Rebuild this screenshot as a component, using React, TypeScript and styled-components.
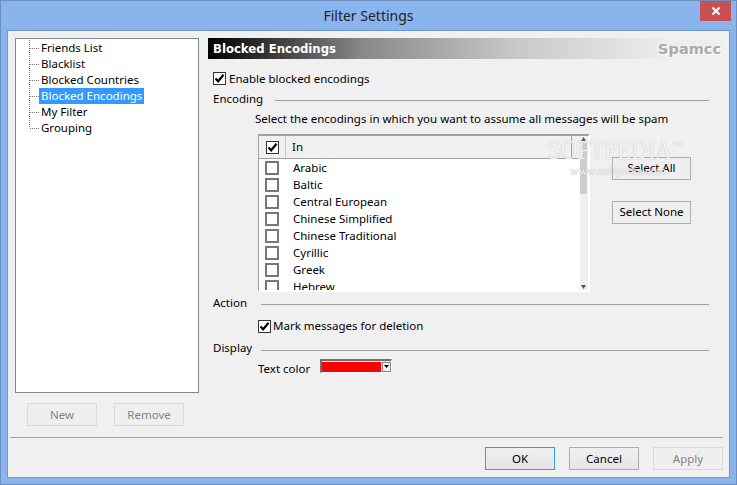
import { FC } from "react";
import styled, { createGlobalStyle } from "styled-components";

const GlobalStyle = createGlobalStyle`
    * { box-sizing: border-box; }
    html, body { margin: 0; padding: 0; }
    body {
        width: 737px;
        height: 485px;
        overflow: hidden;
        font-family: "Noto Sans", "Open Sans", sans-serif;
        font-size: 11.5px;
        color: #000;
    }
`

const Window = styled.div`
    width: 737px;
    height: 485px;
    background: #8ab4ed;
    border: 1px solid #6d8fc0;
    display: flex;
    flex-direction: column;
`
const TitleBar = styled.div`
    height: 29px;
    flex: none;
    display: flex;
    align-items: flex-start;
    justify-content: flex-end;
    position: relative;
`
const TitleText = styled.div`
    position: absolute;
    left: 0;
    right: 0;
    top: 5px;
    text-align: center;
    font-size: 14px;
    line-height: 19px;
    color: #222;
`
const CloseButton = styled.div`
    width: 31px;
    height: 20px;
    margin-right: 5px;
    background: #c75050;
    display: flex;
    align-items: center;
    justify-content: center;
`
const Client = styled.div`
    width: 723px;
    height: 448px;
    margin-left: 6px;
    background: #f0f0f0;
    border: 1px solid #7096cc;
    position: relative;
    display: flex;
    flex-direction: column;
`
const Body = styled.div`
    display: flex;
    gap: 9px;
    padding: 7px 7px 0;
`
const LeftColumn = styled.div`
    width: 184px;
    display: flex;
    flex-direction: column;
`
const TreePanel = styled.div`
    height: 355px;
    background: #fff;
    border: 1px solid #828790;
    padding: 1px 0 0 13px;
`
const TreeRow = styled.div`
    display: flex;
    height: 16px;
    align-items: center;
`
const TreeLabel = styled.span<{ $selected?: boolean }>`
    height: 16px;
    line-height: 16px;
    padding: 0 2px;
    white-space: nowrap;
    background: ${p => (p.$selected ? "#3399ff" : "transparent")};
    color: ${p => (p.$selected ? "#fff" : "#000")};
`
const LeftButtons = styled.div`
    display: flex;
    gap: 17px;
    margin-top: 10px;
    padding-left: 12px;
`
const Button = styled.div<{ $disabled?: boolean; $default?: boolean; $width?: number; $flat?: boolean }>`
    width: ${p => p.$width ?? 70}px;
    height: 23px;
    flex: none;
    display: flex;
    align-items: center;
    justify-content: center;
    padding-bottom: ${p => (p.$flat ? 2 : 0)}px;
    border: 1px solid ${p => (p.$default ? "#3399ff" : p.$disabled ? "#d9d9d9" : "#adadad")};
    background: ${p => (p.$disabled || p.$flat ? "#efefef" : "linear-gradient(#f0f0f0, #e5e5e5)")};
    color: ${p => (p.$disabled ? "#838383" : "#000")};
`
const RightPane = styled.div`
    width: 513px;
    display: flex;
    flex-direction: column;
`
const Banner = styled.div`
    height: 21px;
    flex: none;
    background: linear-gradient(90deg, #000 0%, #888 30%, #c8c8c8 60%, #eeeeee 90%);
    display: flex;
    align-items: center;
    justify-content: space-between;
    padding: 0 0 0 5px;
`
const BannerTitle = styled.span`
    font-family: "DejaVu Sans", sans-serif;
    font-size: 11.7px;
    font-weight: 700;
    color: #fff;
`
const BannerBrand = styled.span`
    font-family: "DejaVu Sans", sans-serif;
    font-size: 14.5px;
    font-weight: 700;
    color: #aaa;
    text-shadow: 1px 1px 0 #fff;
`
const CheckRow = styled.div<{ $left: number; $top: number; $gap: number }>`
    display: flex;
    align-items: center;
    gap: ${p => p.$gap}px;
    height: 13px;
    line-height: 14px;
    margin: ${p => p.$top}px 0 0 ${p => p.$left}px;
`
const CheckText = styled.span<{ $lift?: number }>`
    margin-bottom: ${p => p.$lift ?? 0}px;
`
const Box = styled.span<{ $plain?: boolean }>`
    width: ${p => (p.$plain ? 14 : 13)}px;
    height: ${p => (p.$plain ? 14 : 13)}px;
    flex: none;
    background: #fff;
    border: ${p => (p.$plain ? "2px solid #777" : "1px solid #333")};
    display: flex;
    align-items: center;
    justify-content: center;
`
const SectionHead = styled.div<{ $top: number }>`
    display: flex;
    align-items: center;
    height: 16px;
    margin: ${p => p.$top}px 12px 0 5px;
`
const SectionLabel = styled.span<{ $width: number; $lift: number }>`
    width: ${p => p.$width}px;
    flex: none;
    line-height: 16px;
    margin-bottom: ${p => p.$lift}px;
`
const SectionLine = styled.div`
    flex: 1;
    height: 1px;
    background: #a0a0a0;
`
const Hint = styled.div`
    height: 16px;
    line-height: 16px;
    margin: 3px 0 0 47px;
    white-space: nowrap;
`
const ListRow = styled.div`
    display: flex;
    margin: 7px 0 0 50px;
`
const ListBox = styled.div`
    width: 332px;
    height: 158px;
    flex: none;
    display: flex;
    border-style: solid;
    border-width: 2px 2px 2px 1px;
    border-color: #a0a0a0 #fff #fff #a0a0a0;
    background: #fff;
`
const ListMain = styled.div`
    width: 321px;
    overflow: hidden;
`
const ListHeader = styled.div`
    height: 23px;
    display: flex;
    align-items: center;
    background: #f0f0f0;
    border-bottom: 1px solid #a0a0a0;
`
const HeaderCheckCell = styled.div`
    width: 27px;
    height: 100%;
    flex: none;
    display: flex;
    align-items: center;
    justify-content: center;
    padding-left: 1px;
    border-right: 1px solid #c8c8c8;
`
const HeaderTextCell = styled.div`
    width: 286px;
    height: 100%;
    padding-left: 6px;
    line-height: 22px;
    border-right: 1px solid #a0a0a0;
`
const ListItem = styled.div`
    height: 17px;
    display: flex;
    align-items: center;
    padding-left: 6px;
    gap: 14px;
`
const Scrollbar = styled.div`
    width: 8px;
    flex: none;
    background: #f0f0f0;
    display: flex;
    flex-direction: column;
    align-items: flex-start;
`
const ScrollArrow = styled.div`
    width: 7px;
    height: 6px;
    display: flex;
    justify-content: center;
    align-items: center;
`
const ScrollThumb = styled.div`
    width: 7px;
    height: 51px;
    margin-top: 1px;
    background: #cdcdcd;
`
const ScrollSpace = styled.div`
    flex: 1;
`
const SideButtons = styled.div`
    display: flex;
    flex-direction: column;
    gap: 21px;
    margin-left: 22px;
    padding-top: 23px;
`
const ColorRow = styled.div`
    display: flex;
    margin: 1px 0 0 50px;
`
const ColorLabel = styled.span`
    width: 62px;
    flex: none;
    margin-top: 2px;
    line-height: 16px;
`
const ColorCombo = styled.div`
    width: 72px;
    height: 14px;
    display: flex;
    align-items: center;
    border-style: solid;
    border-width: 2px 1px 1px 2px;
    border-color: #707070 #fff #fff #707070;
    background: #e8e8e8;
`
const ColorSwatch = styled.div`
    width: 59px;
    height: 10px;
    background: #ff0000;
`
const ComboArrow = styled.div`
    width: 9px;
    height: 10px;
    margin-left: 1px;
    background: #f0f0f0;
    border: 1px solid #888;
    display: flex;
    align-items: center;
    justify-content: center;
`
const Separator = styled.div`
    height: 1px;
    width: 713px;
    margin: 11px 0 0 2px;
    background: #a0a0a0;
`
const Footer = styled.div`
    display: flex;
    justify-content: flex-end;
    gap: 14px;
    margin-top: 9px;
    padding-right: 6px;
`
const Watermark = styled.div`
    position: absolute;
    left: 540px;
    top: 101px;
    width: 140px;
    font-family: "Liberation Serif", serif;
    color: rgba(255, 255, 255, 0.85);
    pointer-events: none;
`
const WatermarkBig = styled.div`
    font-size: 23px;
    line-height: 24px;
    white-space: nowrap;
    transform: scaleY(1.15);
    text-shadow: 0 0 1px #aaa;
`
const WatermarkMark = styled.span`
    font-size: 6px;
    vertical-align: 11px;
    margin-left: 1px;
`
const WatermarkUrl = styled.div`
    font-size: 12px;
    line-height: 12px;
    margin: 3px 0 0 22px;
    color: rgba(255, 255, 255, 0.9);
    text-shadow: 0 0 1px #999;
`

const TREE_ITEMS = ["Friends List", "Blacklist", "Blocked Countries", "Blocked Encodings", "My Filter", "Grouping"];
const ENCODINGS = ["Arabic", "Baltic", "Central European", "Chinese Simplified", "Chinese Traditional", "Cyrillic", "Greek", "Hebrew"];

const Tick: FC = () => (
    <svg width="11" height="11" viewBox="0 0 11 11">
        <path d="M1.5 5.5 L4.2 8.3 L9.5 1.8" fill="none" stroke="#000" strokeWidth="2.2" />
    </svg>
);

const Connector: FC<{ last: boolean }> = ({ last }) => (
    <svg width="10" height="16" viewBox="0 0 10 16" style={{ flexShrink: 0 }}>
        <path d={last ? "M0.5 0V8" : "M0.5 0V16"} stroke="#777" strokeDasharray="1 1" />
        <path d="M1 8.5H10" stroke="#777" strokeDasharray="1 1" />
    </svg>
);

const Arrow: FC<{ down?: boolean }> = ({ down }) => (
    <ScrollArrow>
        <svg width="5" height="4" viewBox="0 0 5 4">
            <path d={down ? "M0 0H5L2.5 4Z" : "M0 4H5L2.5 0Z"} fill="#555" />
        </svg>
    </ScrollArrow>
);

const App: FC = () => {
    return (
        <Window>
            <GlobalStyle />
            <TitleBar>
                <TitleText>Filter Settings</TitleText>
                <CloseButton>
                    <svg width="10" height="10" viewBox="0 0 10 10">
                        <path d="M1.5 1.5L8.5 8.5M8.5 1.5L1.5 8.5" stroke="#fff" strokeWidth="2" />
                    </svg>
                </CloseButton>
            </TitleBar>
            <Client>
                <Body>
                    <LeftColumn>
                        <TreePanel>
                            {TREE_ITEMS.map((item, i) => (
                                <TreeRow key={item}>
                                    <Connector last={i === TREE_ITEMS.length - 1} />
                                    <TreeLabel $selected={item === "Blocked Encodings"}>{item}</TreeLabel>
                                </TreeRow>
                            ))}
                        </TreePanel>
                        <LeftButtons>
                            <Button $disabled>New</Button>
                            <Button $disabled>Remove</Button>
                        </LeftButtons>
                    </LeftColumn>
                    <RightPane>
                        <Banner>
                            <BannerTitle>Blocked Encodings</BannerTitle>
                            <BannerBrand>Spamcc</BannerBrand>
                        </Banner>
                        <CheckRow $left={5} $top={13} $gap={3}>
                            <Box><Tick /></Box>
                            <CheckText>Enable blocked encodings</CheckText>
                        </CheckRow>
                        <SectionHead $top={7}>
                            <SectionLabel $width={62} $lift={3}>Encoding</SectionLabel>
                            <SectionLine />
                        </SectionHead>
                        <Hint>Select the encodings in which you want to assume all messages will be spam</Hint>
                        <ListRow>
                            <ListBox>
                                <ListMain>
                                    <ListHeader>
                                        <HeaderCheckCell><Box><Tick /></Box></HeaderCheckCell>
                                        <HeaderTextCell>In</HeaderTextCell>
                                    </ListHeader>
                                    {ENCODINGS.map(name => (
                                        <ListItem key={name}>
                                            <Box $plain />
                                            {name}
                                        </ListItem>
                                    ))}
                                </ListMain>
                                <Scrollbar>
                                    <Arrow />
                                    <ScrollThumb />
                                    <ScrollSpace />
                                    <Arrow down />
                                </Scrollbar>
                            </ListBox>
                            <SideButtons>
                                <Button $width={79} $flat>Select All</Button>
                                <Button $width={79} $flat>Select None</Button>
                            </SideButtons>
                        </ListRow>
                        <SectionHead $top={4}>
                            <SectionLabel $width={48} $lift={2}>Action</SectionLabel>
                            <SectionLine />
                        </SectionHead>
                        <CheckRow $left={50} $top={8} $gap={2}>
                            <Box><Tick /></Box>
                            <CheckText $lift={2}>Mark messages for deletion</CheckText>
                        </CheckRow>
                        <SectionHead $top={9}>
                            <SectionLabel $width={48} $lift={4}>Display</SectionLabel>
                            <SectionLine />
                        </SectionHead>
                        <ColorRow>
                            <ColorLabel>Text color</ColorLabel>
                            <ColorCombo>
                                <ColorSwatch />
                                <ComboArrow>
                                    <svg width="5" height="3" viewBox="0 0 5 3"><path d="M0 0H5L2.5 3Z" fill="#000" /></svg>
                                </ComboArrow>
                            </ColorCombo>
                        </ColorRow>
                    </RightPane>
                </Body>
                <Separator />
                <Footer>
                    <Button $default>OK</Button>
                    <Button>Cancel</Button>
                    <Button $disabled>Apply</Button>
                </Footer>
                <Watermark>
                    <WatermarkBig>SOFTPEDIA<WatermarkMark>TM</WatermarkMark></WatermarkBig>
                    <WatermarkUrl>www.softpedia.com</WatermarkUrl>
                </Watermark>
            </Client>
        </Window>
    );
};

export default App;
